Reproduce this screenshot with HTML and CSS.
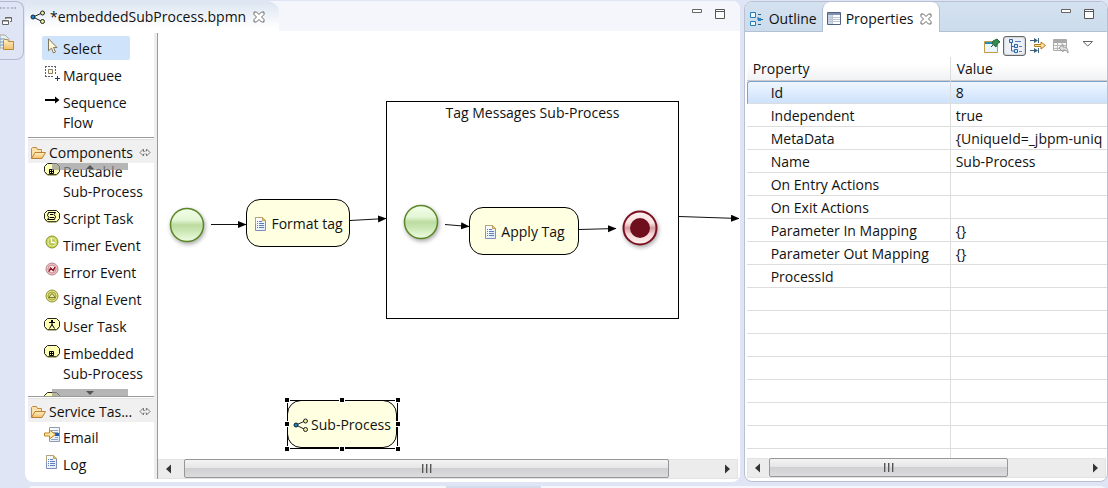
FILE: index.html
```html
<!DOCTYPE html>
<html lang="en">
<head>
<meta charset="utf-8">
<title>embeddedSubProcess.bpmn</title>
<link rel="stylesheet" href="styles.css">
</head>
<body>
<svg class="defs" aria-hidden="true">
  <defs>
    <linearGradient id="g-paper" x1="0" y1="0" x2="1" y2="1"><stop offset="0" stop-color="#fff"/><stop offset="1" stop-color="#dfe9f8"/></linearGradient>
    <linearGradient id="g-green" x1="0" y1="0" x2="0" y2="1"><stop offset="0" stop-color="#f1ffe9"/><stop offset=".35" stop-color="#e3f6d4"/><stop offset=".5" stop-color="#bcdca0"/><stop offset=".65" stop-color="#c8e5b0"/><stop offset="1" stop-color="#effde4"/></linearGradient>
    <linearGradient id="g-red" x1="0" y1="0" x2="0" y2="1"><stop offset="0" stop-color="#fff0f0"/><stop offset=".35" stop-color="#fae0e0"/><stop offset=".5" stop-color="#d79a9f"/><stop offset=".7" stop-color="#f7dada"/><stop offset="1" stop-color="#fff0f0"/></linearGradient>
    <linearGradient id="g-folder" x1="0" y1="0" x2="0" y2="1"><stop offset="0" stop-color="#fff2c2"/><stop offset="1" stop-color="#f2bd69"/></linearGradient>
    <marker id="arrow" markerUnits="userSpaceOnUse" markerWidth="9" markerHeight="8" refX="8" refY="3.5" orient="auto"><path d="M0 0 8.500 3.500 0 7z"/></marker>
    <symbol id="i-flow" viewBox="0 0 16 16"><path d="M3 8 12 4M3 8l9 4.500" stroke="#222" fill="none"/><circle cx="3" cy="8" r="2" fill="#1887c9" stroke="#123"/><circle cx="12.500" cy="4" r="2" fill="#e9ee9a" stroke="#222"/><circle cx="12.500" cy="12.500" r="2" fill="#e9ee9a" stroke="#222"/></symbol>
    <symbol id="i-close" viewBox="0 0 12 12"><path d="M1 1h2.500L6 3.500 8.500 1H11v2.500L8.500 6 11 8.500V11H8.500L6 8.500 3.500 11H1V8.500L3.500 6 1 3.500z" fill="#fff" stroke="#6b6b6b"/></symbol>
    <symbol id="i-min" viewBox="0 0 11 11"><path d="M.5 .5h9v3h-9z" fill="#fff" stroke="#666"/></symbol>
    <symbol id="i-max" viewBox="0 0 11 11"><path d="M.5 .5h9v9h-9zM.5 2.500h9" fill="#fff" stroke="#555"/></symbol>
    <symbol id="i-page" viewBox="0 0 16 16"><path d="M2.500 1.500h7l3 3v10h-10z" fill="url(#g-paper)" stroke="#7f8fb5"/><path d="M2.500 8V1.500h7l3 3" fill="none" stroke="#b3a77b"/><path d="M9.500 1.500v3h3z" fill="#e8c77a" stroke="#c7a24f"/><path d="M4 5.500h1m1 0h3M4 7.500h1m1 0h5M4 9.500h1m1 0h5M4 11.500h1m1 0h5" stroke="#5e7fba"/></symbol>
    <symbol id="i-folder" viewBox="0 0 16 14"><path d="M1.500 12.500v-10l1-1h4l1 2h4v3" fill="#fbe2ad" stroke="#c08a45"/><path d="M1.500 12.500 5 6.500h10.500l-3.500 6z" fill="url(#g-folder)" stroke="#bb8037"/></symbol>
    <symbol id="i-pin" viewBox="0 0 12 10"><path d="M4.500 1 1 4.500 4.500 8M7.500 1 11 4.500 7.500 8M4.500 1v2.500h1V3M7.500 8V6h-1M4.500 8V6h1M7.500 1v2h-1" fill="none" stroke="#777"/></symbol>
    <symbol id="i-select" viewBox="0 0 16 16"><path d="M4.500.8v12l3-2.600L9.500 15l2-1-2-4.500h3.500z" fill="#fff8df" stroke="#83795a"/></symbol>
    <symbol id="i-marquee" viewBox="0 0 16 16"><path d="M1 1.500h11M1 11.500h8M1.500 1v10M11.500 1v8" fill="none" stroke="#58606b" stroke-dasharray="2 1"/><path d="M4.500 4.500h4v4h-4z" fill="#fff7d8" stroke="#8a8165"/><path d="M13.500 11v5M11 13.500h5" stroke="#183d70"/></symbol>
    <symbol id="i-arrow" viewBox="0 0 16 16"><path d="M1 7h12v2H1zM11 4.500 15.500 8 11 11.500z"/></symbol>
    <symbol id="i-task" viewBox="0 0 16 16"><path d="M3.500 2.500h9l3 3v5l-3 3h-9l-3-3v-5z" fill="#ffffb5" stroke="#222"/><path d="M1 11.500 3.500 14h9l2.500-2.500" stroke="#6d6d20" fill="none"/></symbol>
    <symbol id="i-sub" viewBox="0 0 16 16"><use href="#i-task"/><path d="M5.500 8.500h4v4h-4zM7.500 8.500v4M5.500 10.500h4" stroke="#000" fill="none"/></symbol>
    <symbol id="i-script" viewBox="0 0 16 16"><use href="#i-task"/><path d="M4.500 4.500h7l-1.500 2 1.500 2-1 3h-7L5 9.500l-1.500-2zM6 6.500h3M6 9.500h4" stroke="#000" fill="none"/></symbol>
    <symbol id="i-user" viewBox="0 0 16 16"><use href="#i-task"/><path d="M7 4h2v2H7z"/><path d="M5 6.500h6M8 6v3M8 8.500l-2.500 4M8 8.500l2.500 4" stroke="#000" fill="none"/></symbol>
    <symbol id="i-timer" viewBox="0 0 16 16"><circle cx="8" cy="7" r="6" fill="#cbd45a" stroke="#8b962b"/><circle cx="8" cy="7" r="4" fill="#b9c24a" stroke="#e4eb9a"/><path d="M7.500 3.500V7.500H11" stroke="#fff" stroke-width="1.500" fill="none"/></symbol>
    <symbol id="i-error" viewBox="0 0 16 16"><circle cx="8" cy="7" r="6" fill="#ecc3c8" stroke="#b8868b"/><circle cx="8" cy="7" r="4" fill="#f3dddd" stroke="#d18c94"/><path d="m5 9.500 1.500-4L9 8l2-3-1.500 4L7 7z" fill="#8d1424" stroke="#8d1424"/></symbol>
    <symbol id="i-signal" viewBox="0 0 16 16"><circle cx="8" cy="7" r="6" fill="#e0e288" stroke="#93932e"/><circle cx="8" cy="7" r="4" fill="#d8dc76" stroke="#a5a741"/><path d="m4.500 8.500 3.500-4 3.500 4z" fill="#eeee9b" stroke="#77782b"/></symbol>
    <symbol id="i-email" viewBox="0 0 16 16"><path d="M5.500.5h10v14h-10z" fill="url(#g-paper)" stroke="#929ba8"/><path d="M7 3.500h7M9 5.500h5M11 10.500h3M7 12.500h7" stroke="#8da6ce"/><path d="M11 6h4v3h-4z" fill="#235cab"/><path d="M.5 6h5V3l6 4.500-6 4.500V9h-5z" fill="#ffe9a6" stroke="#b88622"/></symbol>
    <symbol id="i-outline" viewBox="0 0 16 16"><path d="M1.500 1.500h5v5h-5zM1.500 10.500h5v4h-5z" fill="#eaf8ff" stroke="#267cba"/><path d="M9 3.500h3M9 13.500h3M9 6v3h1M12 8.500h2" stroke="#2b5f8a" fill="none"/><path d="M9 7h3v3H9z" fill="#2d82bd"/></symbol>
    <symbol id="i-table" viewBox="0 0 16 16"><path d="M1.500 1.500h13v12h-13z" fill="#fff" stroke="#52627c"/><path d="M2 2h12v2H2z" fill="#7f91b1"/><path d="M2 4h4v9H2z" fill="#cbd7ea"/><path d="M2 6.500h12M2 8.500h12M2 10.500h12M6.500 4v9" stroke="#bbc5d4"/></symbol>
    <symbol id="i-pinview" viewBox="0 0 16 16"><path d="M.5 3.500h13v11H.5z" fill="#e9f6fb" stroke="#c49b45"/><path d="M1 4h8v2H1z" fill="#268bbd"/><path d="m7 9 3-3" stroke="#444"/><path d="m9 3 4-2 3 3-2.500 1.500L12 9 8 5.500z" fill="#36884b" stroke="#1d693a"/></symbol>
    <symbol id="i-tree" viewBox="0 0 16 16"><path d="M4.500 4v9H8M4.500 8.500H8" fill="none" stroke="#476694"/><path d="M2.500 1.500h3v3h-3zM7.500 6.500h3v3h-3zM7.500 11.500h3v3h-3z" fill="#dceaff" stroke="#2964a7"/><path d="M8 3.500h6M12 8.500h3M12 13.500h3" stroke="#5b81b9"/></symbol>
    <symbol id="i-filter" viewBox="0 0 16 16"><path d="M0 2.500h6M0 12.500h6M8.500 0v5M8.500 10v5" stroke="#3f6680"/><path d="m4 0 4 2.500L4 5zM4 10l4 2.500L4 15z" fill="#355f7b"/><path d="M4.500 6.500H11V4l4.500 3.500L11 11V8.500H4.500z" fill="#ffe8a0" stroke="#b7791e"/></symbol>
    <symbol id="i-restore" viewBox="0 0 16 16"><path d="M.5 1.500h13v11H.5z" fill="#f5f5f5" stroke="#aaa"/><path d="M1 2h12v3H1z" fill="#aaa"/><path d="M1 7.500h12M1 10.500h12M4.500 5v7M9 5v3" stroke="#bbb"/><path d="m6 10 4-3.500V9c4 0 5 2 5 6-1-2-2-3-5-3v2z" fill="#ddd" stroke="#999"/></symbol>
    <symbol id="i-left" viewBox="0 0 8 10"><path d="M6 .5v9L1 5z" fill="#333"/></symbol>
    <symbol id="i-right" viewBox="0 0 8 10"><path d="M2 .5v9L7 5z" fill="#333"/></symbol>
  </defs>
</svg>

<div class="workbench">
  <aside class="trim" aria-label="Minimized views">
    <span class="grip"></span>
    <button class="bare" aria-label="Restore"><svg width="10" height="10" viewBox="0 0 10 10"><path d="M3.500 3V1.500h6v4H8M.5 4.500h6v4h-6z" fill="#fff" stroke="#666"/><path d="M.5 5h6M3.500 2h6" stroke="#666"/></svg></button>
    <button class="bare explorer" aria-label="Package Explorer"><svg width="16" height="18" viewBox="0 0 16 18"><path d="M0 1h5l4 4v9H0z" fill="#e5eefb" stroke="#a7a994"/><path d="M0 5h5M0 8h3M0 11h3" stroke="#7596c8"/><path d="M3.500 15.500v-9l1-1h3l1 2h5v8z" fill="url(#g-folder)" stroke="#bb8a35"/></svg></button>
  </aside>

  <main class="editor">
    <header class="tabbar">
      <div class="tab editor-tab"><svg class="i16"><use href="#i-flow"/></svg><span>*embeddedSubProcess.bpmn</span><button class="bare" aria-label="Close editor"><svg class="i12"><use href="#i-close"/></svg></button></div>
      <div class="window-tools"><button class="bare" aria-label="Minimize"><svg class="i11"><use href="#i-min"/></svg></button><button class="bare" aria-label="Maximize"><svg class="i11"><use href="#i-max"/></svg></button></div>
    </header>
    <div class="editor-body">
      <nav class="palette" aria-label="Palette">
        <div class="entries">
          <button class="entry selected"><svg class="i16"><use href="#i-select"/></svg><span>Select</span></button>
          <button class="entry"><svg class="i16"><use href="#i-marquee"/></svg><span>Marquee</span></button>
          <button class="entry"><svg class="i16"><use href="#i-arrow"/></svg><span>Sequence Flow</span></button>
        </div>
        <section class="drawer grow">
          <button class="drawer-head"><svg class="i16"><use href="#i-folder"/></svg><span>Components</span><svg class="pin"><use href="#i-pin"/></svg></button>
          <div class="drawer-view">
            <button class="scroll-step up" aria-label="Scroll up"><svg width="8" height="4"><path d="M0 4 4 0l4 4z" fill="#555"/></svg></button>
            <div class="entries scrolled">
              <button class="entry"><svg class="i16"><use href="#i-sub"/></svg><span>Reusable Sub-Process</span></button>
              <button class="entry"><svg class="i16"><use href="#i-script"/></svg><span>Script Task</span></button>
              <button class="entry"><svg class="i16"><use href="#i-timer"/></svg><span>Timer Event</span></button>
              <button class="entry"><svg class="i16"><use href="#i-error"/></svg><span>Error Event</span></button>
              <button class="entry"><svg class="i16"><use href="#i-signal"/></svg><span>Signal Event</span></button>
              <button class="entry"><svg class="i16"><use href="#i-user"/></svg><span>User Task</span></button>
              <button class="entry"><svg class="i16"><use href="#i-sub"/></svg><span>Embedded Sub-Process</span></button>
              <button class="entry" aria-label="Next component"><svg class="i16"><use href="#i-task"/></svg></button>
            </div>
            <button class="scroll-step down" aria-label="Scroll down"><svg width="8" height="4"><path d="M0 0h8L4 4z" fill="#555"/></svg></button>
          </div>
        </section>
        <section class="drawer">
          <button class="drawer-head"><svg class="i16"><use href="#i-folder"/></svg><span>Service Tas...</span><svg class="pin"><use href="#i-pin"/></svg></button>
          <div class="entries">
            <button class="entry"><svg class="i16"><use href="#i-email"/></svg><span>Email</span></button>
            <button class="entry"><svg class="i16"><use href="#i-page"/></svg><span>Log</span></button>
          </div>
        </section>
      </nav>
      <div class="canvas-column">
        <div class="canvas">
          <div class="node container">Tag Messages Sub-Process</div>
          <svg class="edges" width="581" height="426" viewBox="158 33 581 426" fill="none" stroke="#111">
            <path d="M211 224.500h35" marker-end="url(#arrow)"/>
            <path d="M350 220.500l36-2" marker-end="url(#arrow)"/>
            <path d="M445 224.500l24 2" marker-end="url(#arrow)"/>
            <path d="M579 229.500l37-1" marker-end="url(#arrow)"/>
            <path d="M679 216.500l60 2" marker-end="url(#arrow)"/>
          </svg>
          <svg class="node event start-a" viewBox="0 0 36 36"><circle cx="18" cy="18" r="16.500" fill="url(#g-green)" stroke="#5b8727" stroke-width="1.500"/></svg>
          <svg class="node event start-b" viewBox="0 0 36 36"><circle cx="18" cy="18" r="16.500" fill="url(#g-green)" stroke="#5b8727" stroke-width="1.500"/></svg>
          <svg class="node event end" viewBox="0 0 36 36"><circle cx="18" cy="18" r="16.500" fill="url(#g-red)" stroke="#79101f" stroke-width="2"/><circle cx="18" cy="18" r="10" fill="#6f0f1d"/></svg>
          <div class="node task format"><svg class="i16"><use href="#i-page"/></svg><span>Format tag</span></div>
          <div class="node task apply"><svg class="i16"><use href="#i-page"/></svg><span>Apply Tag</span></div>
          <div class="node task picked"><svg class="i16"><use href="#i-flow"/></svg><span>Sub-Process</span></div>
          <svg class="node handles" width="117" height="55" viewBox="0 0 117 55" shape-rendering="crispEdges"><path d="M3.500 3.500h110v48H3.500z" fill="none" stroke="#000"/><g stroke="#fff"><path d="M.5.500h5v5h-5zM55.500.500h5v5h-5zM111.500.500h5v5h-5zM.5 24.500h5v5h-5zM111.500 24.500h5v5h-5zM.5 49.500h5v5h-5zM55.500 49.500h5v5h-5zM111.500 49.500h5v5h-5z"/></g></svg>
        </div>
        <div class="scrollbar"><button class="bare step" aria-label="Scroll left"><svg class="tri"><use href="#i-left"/></svg></button><div class="track"><div class="thumb canvas-thumb"><i></i><i></i><i></i></div></div><button class="bare step" aria-label="Scroll right"><svg class="tri"><use href="#i-right"/></svg></button></div>
      </div>
    </div>
  </main>

  <aside class="views">
    <header class="view-tabs">
      <button class="tab view-tab"><svg class="i16"><use href="#i-outline"/></svg><span>Outline</span></button>
      <div class="tab view-tab active"><svg class="i16"><use href="#i-table"/></svg><span>Properties</span><button class="bare" aria-label="Close view"><svg class="i12"><use href="#i-close"/></svg></button></div>
      <div class="window-tools"><button class="bare" aria-label="Minimize view"><svg class="i11"><use href="#i-min"/></svg></button><button class="bare" aria-label="Maximize view"><svg class="i11"><use href="#i-max"/></svg></button></div>
    </header>
    <div class="toolbar">
      <button class="bare tool" aria-label="Pin view"><svg class="i16"><use href="#i-pinview"/></svg></button>
      <button class="bare tool pressed" aria-label="Show categories"><svg class="i16"><use href="#i-tree"/></svg></button>
      <button class="bare tool" aria-label="Show advanced properties"><svg class="i16"><use href="#i-filter"/></svg></button>
      <button class="bare tool" aria-label="Restore default value" disabled><svg class="i16"><use href="#i-restore"/></svg></button>
      <button class="bare tool menu" aria-label="View menu"><svg width="12" height="8" viewBox="0 0 12 8"><path d="M1 1.500h9.500L5.800 6z" fill="#fff" stroke="#666"/></svg></button>
    </div>
    <div class="table-view">
      <table>
        <colgroup><col class="name-col"><col></colgroup>
        <thead><tr><th scope="col">Property</th><th scope="col">Value</th></tr></thead>
        <tbody>
          <tr class="current"><td>Id</td><td>8</td></tr>
          <tr><td>Independent</td><td>true</td></tr>
          <tr><td>MetaData</td><td>{UniqueId=_jbpm-uniq</td></tr>
          <tr><td>Name</td><td>Sub-Process</td></tr>
          <tr><td>On Entry Actions</td><td></td></tr>
          <tr><td>On Exit Actions</td><td></td></tr>
          <tr><td>Parameter In Mapping</td><td>{}</td></tr>
          <tr><td>Parameter Out Mapping</td><td>{}</td></tr>
          <tr><td>ProcessId</td><td></td></tr>
          <tr><td></td><td></td></tr><tr><td></td><td></td></tr><tr><td></td><td></td></tr><tr><td></td><td></td></tr>
          <tr><td></td><td></td></tr><tr><td></td><td></td></tr><tr><td></td><td></td></tr><tr><td></td><td></td></tr>
        </tbody>
      </table>
    </div>
    <div class="scrollbar"><button class="bare step" aria-label="Scroll left"><svg class="tri"><use href="#i-left"/></svg></button><div class="track"><div class="thumb table-thumb"><i></i><i></i><i></i></div></div><button class="bare step" aria-label="Scroll right"><svg class="tri"><use href="#i-right"/></svg></button></div>
  </aside>
</div>
<footer class="lower-pane"><span></span></footer>
</body>
</html>
```
FILE: styles.css
```css
* { box-sizing: border-box; }
body {
  margin: 0;
  height: 100vh;
  display: flex;
  flex-direction: column;
  overflow: hidden;
  background: #e0e5f5;
  color: #111;
  font: 14px/20px "Open Sans", "Noto Sans", sans-serif;
}
button { font: inherit; color: inherit; margin: 0; border: 0; padding: 0; background: none; text-align: left; }
svg { display: block; flex: none; }
.defs { position: absolute; width: 0; height: 0; }
.i16 { width: 16px; height: 16px; }
.i12 { width: 12px; height: 12px; }
.i11 { width: 11px; height: 11px; }
.workbench { flex: 1; min-height: 0; display: flex; padding-top: 1px; }

.trim {
  width: 24px;
  height: 59px;
  margin-right: 1px;
  border: 1px solid #b3b9cf;
  border-left: 0;
  border-radius: 0 8px 8px 0;
  display: flex;
  flex-direction: column;
  align-items: flex-start;
  overflow: hidden;
}
.grip { width: 16px; margin: 5px 0 7px; border-top: 2px dotted #b5bbce; }
.trim .bare { margin-left: 2px; }
.trim .explorer { margin: 8px 0 0; }

.editor {
  flex: 716;
  min-width: 0;
  margin-right: 4px;
  display: flex;
  flex-direction: column;
  background: #fff;
  border-radius: 8px;
  padding-bottom: 3px;
}
.tabbar { display: flex; height: 30px; background: #f5f6fc; border-radius: 8px 8px 0 0; }
.tab { display: flex; align-items: center; white-space: nowrap; }
.editor-tab {
  padding: 2px 14px 0 5px;
  gap: 4px;
  background: linear-gradient(#dbe5f1, #fff 90%);
  border-radius: 8px 12px 0 0;
}
.tab .bare { margin-left: 3px; }
.window-tools { margin-left: auto; padding: 8px 14px 0 0; display: flex; gap: 12px; align-items: flex-start; }
.editor-body { flex: 1; min-height: 0; display: flex; padding-top: 2px; }

.palette {
  width: 133px;
  flex: none;
  display: flex;
  flex-direction: column;
  padding: 0 3px 0 3px;
  border-right: 1px solid #999;
  box-shadow: inset -3px 0 #eee;
}
.entries { display: flex; flex-direction: column; align-items: flex-start; gap: 3px; padding: 3px 0 3px 14px; }
.entry { display: flex; gap: 3px; padding: 2px 0 1px 2px; min-height: 24px; }
.entry span { width: 88px; padding-top: 1px; }
.selected { background: #cfe3fb; border-radius: 2px; }
.selected span { width: 67px; }
.drawer { border-top: 1px solid #999; padding-top: 1px; }
.grow { flex: 1; min-height: 0; display: flex; flex-direction: column; }
.drawer-head {
  display: flex;
  flex: none;
  align-items: center;
  gap: 3px;
  width: 100%;
  height: 24px;
  padding: 3px 3px 0 2px;
  background: #f0f0f0;
  border-top: 1px solid #e2e2e2;
  white-space: nowrap;
}
.pin { width: 12px; height: 10px; margin-left: auto; }
.drawer-view { position: relative; flex: 1; min-height: 0; overflow: hidden; }
.scrolled { padding-top: 0; margin-top: -4px; }
.scroll-step {
  position: absolute;
  left: 24px;
  width: 76px;
  height: 7px;
  display: flex;
  justify-content: center;
  align-items: center;
  background: rgb(150 150 150 / 70%);
}
.up { top: 0; }
.down { bottom: 0; }

.canvas-column { flex: 1; min-width: 0; display: flex; flex-direction: column; }
.canvas { flex: 1; min-height: 0; position: relative; overflow: hidden; }
.edges, .node { position: absolute; }
.edges { left: 0; top: 0; }
.container { left: 228px; top: 68px; width: 293px; height: 218px; padding-top: 1px; border: 1px solid #000; text-align: center; }
.event { width: 36px; height: 36px; filter: drop-shadow(1px 2px 2px rgb(0 0 0 / 35%)); overflow: visible; }
.start-a { left: 11px; top: 174px; }
.start-b { left: 245px; top: 171px; }
.end { left: 464px; top: 177px; }
.task {
  display: flex;
  align-items: center;
  justify-content: center;
  gap: 2px;
  height: 48px;
  padding-top: 2px;
  background: #ffffe1;
  border: 1px solid #000;
  border-radius: 14px;
  white-space: nowrap;
}
.format { left: 88px; top: 166px; width: 104px; }
.apply { left: 311px; top: 174px; width: 110px; }
.picked { left: 129px; top: 367px; width: 110px; }
.handles { left: 126px; top: 364px; }

.scrollbar { height: 20px; display: flex; background: #ececec; margin-right: 2px; border: 1px solid #e3e3e3; }
.step { width: 20px; display: flex; align-items: center; justify-content: center; }
.tri { width: 8px; height: 10px; }
.track { flex: 1; display: flex; margin: -1px 5px 0; }
.thumb {
  display: flex;
  align-items: center;
  justify-content: center;
  gap: 2px;
  border: 1px solid #979797;
  border-radius: 2px;
  background: linear-gradient(#f4f4f4, #e6e6e6 45%, #d0d0d2 50%, #dcdcde);
}
.thumb i { width: 2px; height: 9px; background: linear-gradient(90deg, #555 50%, #aaa 50%); }
.canvas-thumb { width: 92%; }
.table-thumb { width: 77%; }

.views {
  flex: 363;
  min-width: 0;
  display: flex;
  flex-direction: column;
  background: #fff;
  border: 1px solid #b9c0d3;
  border-radius: 8px;
  padding-bottom: 3px;
  overflow: hidden;
}
.view-tabs { display: flex; height: 30px; background: linear-gradient(#d4e1ef, #cbdcec); box-shadow: inset 0 -1px #b3bfd3; }
.view-tab { gap: 4px; padding: 3px 5px 0 4px; }
.active { background: #fff; border: 1px solid #b3bfd3; border-width: 0 1px; border-radius: 8px 8px 0 0; padding: 3px 7px 0 3px; }
.view-tabs .window-tools { padding-top: 7px; padding-right: 12px; }
.toolbar { height: 25px; flex: none; display: flex; justify-content: flex-end; align-items: center; padding: 2px 8px 0 0; }
.tool { width: 23px; height: 20px; display: flex; align-items: center; justify-content: center; }
.pressed { border: 1px solid #666; border-radius: 3px; background: #edf1f7; box-shadow: inset 0 0 2px #999; }
.menu { margin-left: 4px; align-items: flex-start; padding-top: 4px; }
.table-view { flex: 1; min-height: 0; overflow: hidden; padding-left: 2px; }
table { width: 100%; table-layout: fixed; border-collapse: separate; border-spacing: 0; }
.name-col { width: 204px; }
th, td { height: 23px; padding: 1px 5px 0; overflow: hidden; white-space: nowrap; border-right: 1px solid #ddd; border-bottom: 1px solid #ddd; line-height: 20px; }
th { height: 24px; padding-left: 6px; text-align: left; font-weight: 400; background: linear-gradient(#fff 30%, #f1f2f4); border-bottom-color: #ccc; }
td:first-child { padding-left: 24px; }
td:last-child, th:last-child { border-right: 0; }
.current td { background: linear-gradient(#eff6ff, #cde2fc); border-top: 1px solid #7da2ce; }
.current td:first-child { border-left: 1px solid #7da2ce; padding-left: 23px; border-top-left-radius: 3px; }
.views .scrollbar { margin-left: 2px; margin-right: 1px; }
.views .track { margin-left: 1px; }

.lower-pane { flex: none; height: 6px; padding: 4px 0 0 26px; overflow: hidden; }
.lower-pane span { display: block; height: 8px; background: linear-gradient(90deg, #f6f7fc 420px, #d3dced 420px, #d3dced 515px, #f6f7fc 515px); border-radius: 8px 8px 0 0; }
```
